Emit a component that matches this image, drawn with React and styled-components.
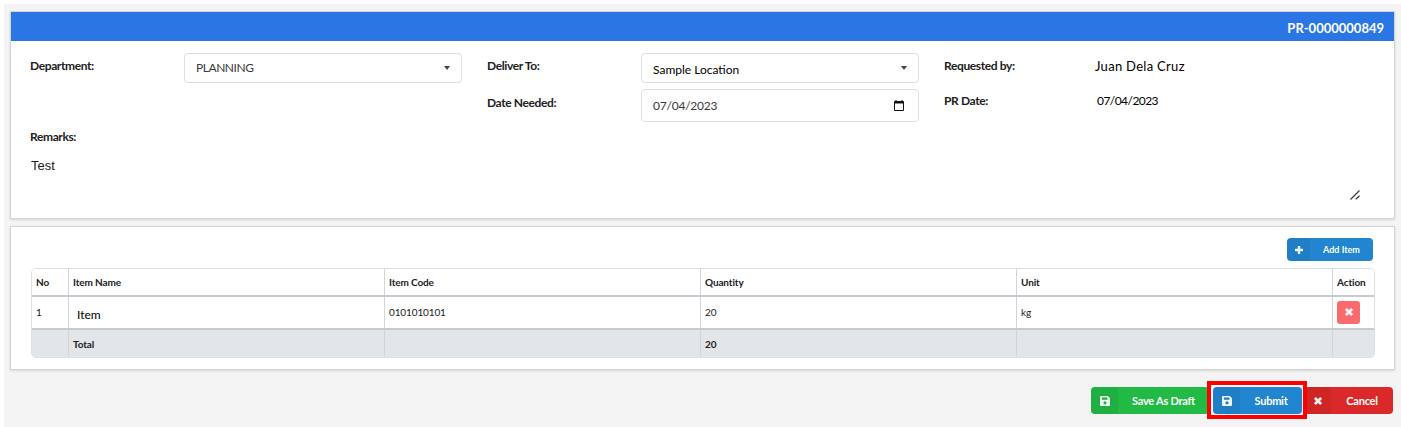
import React from "react";
import styled, { createGlobalStyle } from "styled-components";

const Global = createGlobalStyle`
  * { box-sizing: border-box; }
  body { margin: 0; background: #fff; font-family: Lato, "Liberation Sans", sans-serif; color: #212121; overflow: hidden; }
`;
const Page = styled.main`
  height: 423px; margin: 4px 0 0 4px; padding: 7px 6px 0 6px; background: #f4f4f4;
`;
const Panel = styled.section`
  height: ${p => p.$h}px; background: #fff; border: 1px solid #d4d4d5;
  box-shadow: 0 1px 2px rgba(34,36,38,.15);
  margin-bottom: ${p => p.$gap || 0}px;
`;
const PanelHeader = styled.header`
  height: 29px; background: #2a76e4; color: #fff; font-size: 13px; font-weight: 700;
  line-height: 33px; text-align: right; padding-right: 10px;
`;
const FormGrid = styled.div`
  display: grid; grid-template-columns: 457px 457px 1fr; padding: 12px 0 0 19px; height: 88px;
`;
const Column = styled.div`display: flex; flex-direction: column; gap: 6px;`;
const Field = styled.div`
  display: grid; grid-template-columns: 154px 278px; height: ${p => p.$h || 30}px;
`;
const Label = styled.label`
  font-size: 12px; font-weight: 700; line-height: 16px; padding-top: ${p => p.$top ?? 5}px; letter-spacing: -.38px;
`;
const Control = styled.div`
  height: 100%; border: 1px solid #dededf; border-radius: 4px; display: flex; align-items: center;
  justify-content: space-between; padding: 0 ${p => p.$right || 11}px 0 11px; font-size: 12px; color: #3a3a3a;
`;
const Typed = styled.span`
  color: #000; font-size: ${p => p.$size || 13}px; line-height: 16px; letter-spacing: ${p => p.$ls || 0}px;
  padding: ${p => p.$pad || "0"}; margin-left: ${p => p.$shift || 0}px;
`;
const Selected = styled.span`letter-spacing: -.45px; padding-bottom: 1px;`;
const DateText = styled.span`letter-spacing: -.22px; padding-bottom: 1px;`;
const Caret = styled.i`
  border: 3px solid transparent; border-top: 4px solid #444; border-bottom: 0; margin-bottom: 1px;
`;
const Remarks = styled.div`padding: 0 34px 0 19px;`;
const RemarksText = styled.div`
  display: flex; justify-content: space-between; align-items: flex-end; height: 43px;
  margin-top: 12px; padding-left: 1px; font: 13px/18px "Liberation Sans", sans-serif; color: #222;
  & > span { align-self: flex-start; }
`;
const Toolbar = styled.div`display: flex; justify-content: flex-end; padding: 11px 21px 7px 0;`;
const Button = styled.button`
  display: flex; align-items: stretch; height: ${p => p.$small ? 23 : 27}px; width: ${p => p.$w}px;
  border: 0; padding: 0; border-radius: 4px; overflow: hidden; background: ${p => p.$color}; color: #fff;
  font: 700 ${p => p.$small ? 9 : 11}px Lato, sans-serif; letter-spacing: ${p => p.$small ? 0 : -.25}px;
`;
const IconCell = styled.span`
  display: grid; place-items: center; width: ${p => p.$small ? 23 : 27}px; background: rgba(0,0,0,.05);
`;
const Caption = styled.span`flex: 1; display: grid; place-items: center; white-space: nowrap;`;
const Table = styled.div`
  margin: 0 19px 0 20px; border: 1px solid #dcdfe1; border-radius: 5px; overflow: hidden; font-size: 10px;
`;
const Row = styled.div`
  display: grid; grid-template-columns: 37px 316px 316px 316px 316px 1fr;
  height: ${p => p.$h}px; font-weight: ${p => p.$bold ? 700 : 400}; letter-spacing: -.12px;
  background: ${p => p.$fill || "#fff"}; border-bottom: ${p => p.$last ? 0 : "2px solid #c6cbd1"};
`;
const Cell = styled.div`
  display: flex; align-items: center; padding: 0 0 ${p => p.$lift || 0}px 4px; border-right: 1px solid #d2d6da;
  &:last-child { border-right: 0; }
`;
const DeleteButton = styled.button`
  width: 23px; height: 23px; border: 0; padding: 0 0 1px; border-radius: 3px; background: #f96b6e; display: grid; place-items: center;
`;
const Actions = styled.footer`display: flex; justify-content: flex-end; padding: 17px 2px 0 0;`;
const SubmitSlot = styled.div`
  position: relative; margin: 0 2px 0 4px;
  &::after {
    content: ""; position: absolute; z-index: 1; top: -6px; right: -5px; bottom: -5px; left: -6px;
    border: 4px solid #f00; pointer-events: none;
  }
`;

const SaveIcon = () => (
  <svg width="10" height="10" viewBox="0 0 10 10" fill="#fff" fillOpacity=".92" fillRule="evenodd">
    <path d="M1 0H7.8L10 2.2V9Q10 10 9 10H1Q0 10 0 9V1Q0 0 1 0ZM2 1.5V3.7H7.4V1.5ZM5 5.2A1.6 1.6 0 1 0 5 8.4A1.6 1.6 0 1 0 5 5.2Z" />
  </svg>
);
const CrossIcon = () => (
  <svg width="8" height="8" viewBox="0 0 8 8" fill="none" stroke="#fff" strokeOpacity=".92" strokeWidth="2.7"><path d="M.9.9 7.1 7.1M7.1.9.9 7.1" /></svg>
);
const PlusIcon = () => (
  <svg width="8" height="8" viewBox="0 0 8 8" fill="none" stroke="#fff" strokeOpacity=".92" strokeWidth="2.4"><path d="M4 0V8M0 4H8" /></svg>
);
const CalendarIcon = () => (
  <svg width="10" height="11" viewBox="0 0 10 11" fill="#111">
    <path fillRule="evenodd" d="M1.5 0H2.5V1H7.5V0H8.5V1H9Q10 1 10 2V10Q10 11 9 11H1Q0 11 0 10V2Q0 1 1 1H1.5ZM1 3.5V10H9V3.5Z" />
  </svg>
);
const GripIcon = () => (
  <svg width="10" height="10" viewBox="0 0 10 10" stroke="#444" strokeWidth="1.4"><path d="M.5 9.5 9.5.5M5.7 9.3 9.5 5.8" /></svg>
);

export default function App() {
  return (
    <>
      <Global />
      <Page>
        <Panel $h={208} $gap={7}>
          <PanelHeader>PR-0000000849</PanelHeader>
          <FormGrid>
            <Column>
              <Field><Label>Department:</Label><Control><Selected>PLANNING</Selected><Caret /></Control></Field>
            </Column>
            <Column>
              <Field><Label>Deliver To:</Label><Control><Typed $size={12} $pad="4px 0 0">Sample Location</Typed><Caret /></Control></Field>
              <Field $h={33}><Label $top={6}>Date Needed:</Label><Control $right={14}><DateText>07/04/2023</DateText><CalendarIcon /></Control></Field>
            </Column>
            <Column>
              <Field><Label>Requested by:</Label><Typed $pad="5px 0 0" $shift={-3} $ls={.3}>Juan Dela Cruz</Typed></Field>
              <Field><Label $top={4}>PR Date:</Label><Typed $size={12} $pad="4px 0 0" $shift={-1} $ls={-.55}>07/04/2023</Typed></Field>
            </Column>
          </FormGrid>
          <Remarks>
            <Label as="div" $top={0}>Remarks:</Label>
            <RemarksText><span>Test</span><GripIcon /></RemarksText>
          </Remarks>
        </Panel>
        <Panel $h={144}>
          <Toolbar>
            <Button $small $w={86} $color="#2185d0"><IconCell $small><PlusIcon /></IconCell><Caption>Add Item</Caption></Button>
          </Toolbar>
          <Table>
            <Row $h={28} $bold><Cell>No</Cell><Cell>Item Name</Cell><Cell>Item Code</Cell><Cell>Quantity</Cell><Cell>Unit</Cell><Cell>Action</Cell></Row>
            <Row $h={33}><Cell $lift={2}>1</Cell><Cell><Typed $size={12} $pad="4px 0 0 4px">Item</Typed></Cell><Cell $lift={2}>0101010101</Cell><Cell $lift={2}>20</Cell><Cell $lift={2}>kg</Cell><Cell><DeleteButton aria-label="Delete"><CrossIcon /></DeleteButton></Cell></Row>
            <Row $h={27} $bold $last $fill="#e2e6e9"><Cell /><Cell>Total</Cell><Cell /><Cell>20</Cell><Cell /><Cell /></Row>
          </Table>
        </Panel>
        <Actions>
          <Button $w={118} $color="#21ba45"><IconCell><SaveIcon /></IconCell><Caption>Save As Draft</Caption></Button>
          <SubmitSlot><Button $w={89} $color="#2185d0"><IconCell><SaveIcon /></IconCell><Caption>Submit</Caption></Button></SubmitSlot>
          <Button $w={89} $color="#db2828"><IconCell><CrossIcon /></IconCell><Caption>Cancel</Caption></Button>
        </Actions>
      </Page>
    </>
  );
}
